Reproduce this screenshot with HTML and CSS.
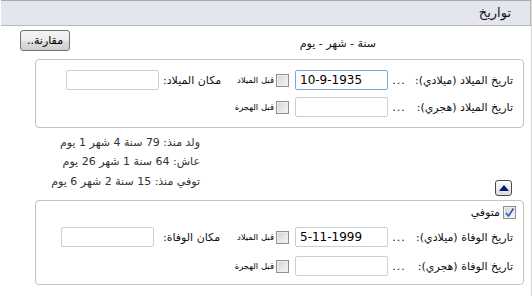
FILE: index.html
```html
<!DOCTYPE html>
<html lang="ar" dir="rtl">
<head>
    <meta charset="UTF-8">
    <meta name="viewport" content="width=device-width, initial-scale=1.0">
    <title>تواريخ</title>

    <link rel="stylesheet" href="styles.css">

</head>
<body>
    <div class="panel">
        <div class="panel-head">تواريخ</div>

        <div class="toolbar">
            <span class="format">سنة - شهر - يوم</span>
            <button class="btn">مقارنة..</button>
        </div>

        <div class="box box-birth">
            <div class="row">
                <label class="lbl">تاريخ الميلاد (ميلادي):</label>
                <span class="dots">...</span>
                <input class="date focus" type="text" value="10-9-1935">
                <input class="chk" type="checkbox">
                <label class="era">قبل الميلاد</label>
                <label class="place-lbl">مكان الميلاد:</label>
                <input class="place" type="text">
            </div>
            <div class="row">
                <label class="lbl">تاريخ الميلاد (هجري):</label>
                <span class="dots">...</span>
                <input class="date" type="text">
                <input class="chk" type="checkbox">
                <label class="era">قبل الهجرة</label>
            </div>
        </div>

        <div class="summary">
            <button class="toggle">
                <svg width="10" height="6" viewBox="0 0 10 6"><polygon points="0,6 10,6 5,0" fill="#0b1870"/></svg>
            </button>
            <div class="lines">
                <div class="line">ولد منذ: 79 سنة 4 شهر 1 يوم</div>
                <div class="line">عاش: 64 سنة 1 شهر 26 يوم</div>
                <div class="line last">توفي منذ: 15 سنة 2 شهر 6 يوم</div>
            </div>
        </div>

        <div class="box box-death">
            <div class="row-dead">
                <span class="chk checked">
                    <svg width="11" height="11" viewBox="0 0 11 11"><path d="M2 6 L4.5 9 L9.5 1.5" fill="none" stroke="#2f56b0" stroke-width="1.6"/></svg>
                </span>
                <label class="dead-lbl">متوفي</label>
            </div>
            <div class="row">
                <label class="lbl">تاريخ الوفاة (ميلادي):</label>
                <span class="dots">...</span>
                <input class="date" type="text" value="5-11-1999">
                <input class="chk" type="checkbox">
                <label class="era">قبل الميلاد</label>
                <label class="place-lbl">مكان الوفاة:</label>
                <input class="place place-death" type="text">
            </div>
            <div class="row row-low">
                <label class="lbl">تاريخ الوفاة (هجري):</label>
                <span class="dots">...</span>
                <input class="date" type="text">
                <input class="chk" type="checkbox">
                <label class="era">قبل الهجرة</label>
            </div>
        </div>
    </div>
</body>
</html>
```

FILE: styles.css
```css
body{
    margin:0;
    padding:0;
    background-color: white;
    font-family: "DejaVu Sans", sans-serif;
    font-size: 11px;
    color: #222;
}

.panel{
    width: 530px;
    height: 296px;
    border-right: 1px solid #d4d4d4;
}

.panel-head{
    height: 24px;
    line-height: 24px;
    background-color: #e3e6ee;
    border-top: 1px solid #a9a9a9;
    border-bottom: 1px solid #b9b9b9;
    border-right: 1px solid #b9b9b9;
    padding-right: 19px;
    font-size: 13px;
    color: #111;
}

.toolbar{
    display: flex;
    justify-content: space-between;
    align-items: flex-start;
    height: 33px;
    padding: 0 155px 0 19px;
}

.format{
    margin-top: 11px;
    color: #111;
}

.btn{
    margin-top: 4px;
    width: 50px;
    height: 21px;
    padding: 0;
    border: 1px solid #707070;
    border-radius: 3px;
    background: linear-gradient(#f4f4f4 0%, #ebebeb 50%, #dddddd 51%, #cfcfcf 100%);
    font-family: inherit;
    font-size: 11px;
    color: #000;
}

.box{
    margin: 0 7px 0 34px;
    border: 1px solid #c3c3c3;
    border-radius: 4px;
    padding: 10px 10px 10px 0;
}

.box-death{
    padding: 4px 10px 8px 0;
}

.row{
    display: flex;
    align-items: center;
    height: 20px;
}

.row + .row{
    margin-top: 7px;
}

.row-dead + .row{
    margin-top: 8px;
}

.box-death .row-low{
    margin-top: 9px;
}

.lbl{
    width: 105px;
    flex-shrink: 0;
    color: #111;
}

.dots{
    width: 18px;
    text-align: center;
    letter-spacing: 1px;
    color: #111;
}

input[type="text"]{
    box-sizing: border-box;
    height: 20px;
    border: 1px solid #c9d0da;
    border-radius: 2px;
    padding: 0 4px;
    direction: ltr;
    text-align: left;
    font-family: inherit;
    font-size: 12px;
    color: #000;
    background: white;
}

.date{
    width: 93px;
    margin-right: 2px;
}

.date.focus{
    border-color: #7ea6d6;
}

.chk{
    appearance: none;
    -webkit-appearance: none;
    box-sizing: border-box;
    width: 13px;
    height: 13px;
    margin: 0 6px 0 0;
    border: 1px solid #8e8f8f;
    background: linear-gradient(135deg, #d2d2d2, #f7f7f7);
    box-shadow: inset 0 0 0 1px #eeeeee;
}

.era{
    width: 45px;
    margin-right: 2px;
    font-size: 8.5px;
    color: #000;
}

.place-lbl{
    width: 66px;
    text-align: left;
    color: #111;
}

.place{
    width: 93px;
    margin-right: 4px;
}

.place-death{
    margin-right: 9px;
}

.row-dead{
    display: flex;
    align-items: center;
    height: 14px;
    margin-right: -3px;
}

.row-dead .chk{
    display: flex;
    align-items: center;
    justify-content: center;
    margin: 0;
}

.dead-lbl{
    margin-right: 3px;
    color: #111;
}

.summary{
    display: flex;
    padding: 5px 19px 8px 0;
}

.toggle{
    align-self: flex-end;
    margin-bottom: -4px;
    box-sizing: border-box;
    width: 17px;
    height: 16px;
    padding: 0;
    border: 1px solid #4a4a4a;
    border-radius: 3px;
    background: linear-gradient(#fdfdfd, #dcdcdc);
    display: flex;
    align-items: center;
    justify-content: center;
}

.lines{
    margin-right: 295px;
    color: #333;
}

.line{
    height: 19px;
    line-height: 19px;
}

.line.last{
    height: 21px;
    line-height: 21px;
}
```
